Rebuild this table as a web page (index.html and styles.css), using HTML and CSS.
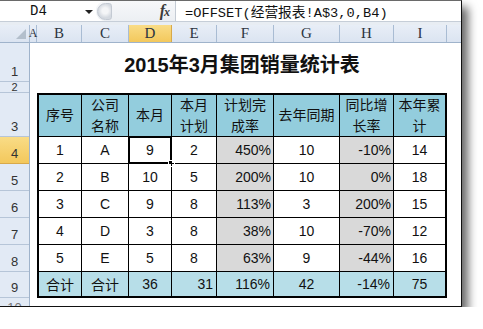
FILE: index.html
```html
<!DOCTYPE html>
<html lang="zh">
<head>
<meta charset="utf-8">
<title>2015年3月集团销量统计表</title>
<link rel="stylesheet" href="styles.css">
</head>
<body>
<div class="frame">
  <div class="fbar">
    <div class="namebox"><span class="ref">D4</span><span class="arrow"></span></div>
    <div class="fmid"><span class="pill"></span><span class="fx"><i>f</i><i class="fxx">x</i></span></div>
    <div class="formula">=OFFSET(经营报表!A$3,0,B4)</div>
  </div>
  <div class="gap"></div>
  <div class="colheads">
    <div class="ch corner"><span class="tri"></span></div>
    <div class="ch w-a">A</div>
    <div class="ch w-b">B</div>
    <div class="ch w-c">C</div>
    <div class="ch w-d sel">D</div>
    <div class="ch w-e">E</div>
    <div class="ch w-f">F</div>
    <div class="ch w-g">G</div>
    <div class="ch w-h">H</div>
    <div class="ch w-i">I</div>
    <div class="ch w-j"></div>
  </div>
  <div class="sheet">
    <div class="rowheads">
      <div class="rh h1">1</div>
      <div class="rh h2">2</div>
      <div class="rh h3">3</div>
      <div class="rh hd sel">4</div>
      <div class="rh hd">5</div>
      <div class="rh hd">6</div>
      <div class="rh hd">7</div>
      <div class="rh hd">8</div>
      <div class="rh h9">9</div>
      <div class="rh h10"><span>10</span></div>
    </div>
    <div class="content">
      <div class="title">2015年3月集团销量统计表</div>
      <div class="table">
        <div class="cell hd-c">序号</div>
        <div class="cell hd-c">公司<br>名称</div>
        <div class="cell hd-c">本月</div>
        <div class="cell hd-c">本月<br>计划</div>
        <div class="cell hd-c">计划完<br>成率</div>
        <div class="cell hd-c">去年同期</div>
        <div class="cell hd-c">同比增<br>长率</div>
        <div class="cell hd-c">本年累<br>计</div>

        <div class="cell">1</div>
        <div class="cell">A</div>
        <div class="cell active">9<span class="selbox"></span><span class="handle"></span></div>
        <div class="cell">2</div>
        <div class="cell grey right">450%</div>
        <div class="cell">10</div>
        <div class="cell grey right">-10%</div>
        <div class="cell">14</div>

        <div class="cell">2</div>
        <div class="cell">B</div>
        <div class="cell">10</div>
        <div class="cell">5</div>
        <div class="cell grey right">200%</div>
        <div class="cell">10</div>
        <div class="cell grey right">0%</div>
        <div class="cell">18</div>

        <div class="cell">3</div>
        <div class="cell">C</div>
        <div class="cell">9</div>
        <div class="cell">8</div>
        <div class="cell grey right">113%</div>
        <div class="cell">3</div>
        <div class="cell grey right">200%</div>
        <div class="cell">15</div>

        <div class="cell">4</div>
        <div class="cell">D</div>
        <div class="cell">3</div>
        <div class="cell">8</div>
        <div class="cell grey right">38%</div>
        <div class="cell">10</div>
        <div class="cell grey right">-70%</div>
        <div class="cell">12</div>

        <div class="cell">5</div>
        <div class="cell">E</div>
        <div class="cell">5</div>
        <div class="cell">8</div>
        <div class="cell grey right">63%</div>
        <div class="cell">9</div>
        <div class="cell grey right">-44%</div>
        <div class="cell">16</div>

        <div class="cell total">合计</div>
        <div class="cell total">合计</div>
        <div class="cell total">36</div>
        <div class="cell total right">31</div>
        <div class="cell total right">116%</div>
        <div class="cell total">42</div>
        <div class="cell total right">-14%</div>
        <div class="cell total">75</div>
      </div>
    </div>
  </div>
</div>
</body>
</html>
```

FILE: styles.css
```css
html, body {
  margin: 0;
  padding: 0;
  background: #fff;
}

.frame {
  width: 462px;
  height: 307px;
  box-sizing: border-box;
  border-top: 1px solid #6a6a6a;
  border-right: 1px solid #111;
  border-bottom: 1px solid #111;
  background: #fff;
  overflow: hidden;
  display: flex;
  flex-direction: column;
  box-shadow: 6px 7px 9px rgba(0, 0, 0, 0.6);
}

/* ---------- formula bar ---------- */
.fbar {
  flex: none;
  height: 21px;
  box-sizing: border-box;
  border-bottom: 1px solid #c6ced8;
  display: flex;
  background: #fff;
}

.namebox {
  width: 96px;
  display: flex;
  align-items: center;
  padding-left: 30px;
  box-sizing: border-box;
}

.ref {
  font-family: "Liberation Mono", monospace;
  font-size: 14px;
  color: #111;
  width: 55px;
}

.arrow {
  width: 0;
  height: 0;
  border-left: 4px solid transparent;
  border-right: 4px solid transparent;
  border-top: 4px solid #222;
  margin-top: 1px;
}

.fmid {
  width: 80px;
  display: flex;
  align-items: center;
  justify-content: space-between;
  background: linear-gradient(#f7f8fa, #eceff3);
  border-radius: 9px 0 0 9px;
  border-right: 1px solid #c4cbd4;
  padding: 0 6px 0 1px;
  box-sizing: border-box;
}

.pill {
  width: 15px;
  height: 17px;
  border-radius: 9px 3px 3px 9px;
  background: radial-gradient(circle at 55% 45%, #f4f5f7 0 3px, #d4d9e0 7px);
  border: 1px solid #c4cad3;
  box-sizing: border-box;
}

.fx {
  font-family: "Liberation Serif", serif;
  font-weight: bold;
  font-size: 16px;
  color: #3a3a3a;
  letter-spacing: -1px;
}

.fx i {
  font-style: italic;
}

.fxx {
  font-size: 12px;
}

.formula {
  flex: 1;
  display: flex;
  align-items: center;
  padding-left: 9px;
  font-family: "Liberation Mono", "Noto Sans CJK SC", monospace;
  font-size: 13.7px;
  color: #111;
  white-space: nowrap;
}

.gap {
  flex: none;
  height: 3px;
  background: #e8edf3;
}

/* ---------- column headers ---------- */
.colheads {
  flex: none;
  height: 18px;
  box-sizing: border-box;
  display: flex;
  background: linear-gradient(#e8eef7, #dbe4f1);
  border-bottom: 1px solid #9fb3cb;
}

.ch {
  flex: none;
  box-sizing: border-box;
  border-right: 1px solid #a9bcd3;
  display: flex;
  align-items: center;
  justify-content: center;
  font-family: "Liberation Serif", serif;
  font-size: 15px;
  color: #2d3440;
}

.corner {
  width: 30px;
  justify-content: flex-end;
  align-items: flex-end;
  padding: 0 3px 3px 0;
}

.tri {
  width: 0;
  height: 0;
  border-left: 10px solid transparent;
  border-bottom: 10px solid #b3bfcc;
}

.w-a { width: 7px; font-size: 12px; }
.w-b { width: 45px; }
.w-c { width: 47px; }
.w-d { width: 43px; }
.w-e { width: 45px; }
.w-f { width: 57px; }
.w-g { width: 66px; }
.w-h { width: 54px; }
.w-i { width: 53px; }
.w-j { flex: 1; border-right: none; }

.ch.sel {
  background: linear-gradient(#f9dc86, #f3c85c);
  border-right-color: #d8a94a;
}

/* ---------- sheet body ---------- */
.sheet {
  flex: 1;
  display: flex;
  min-height: 0;
}

.rowheads {
  flex: none;
  width: 30px;
  box-sizing: border-box;
  border-right: 1px solid #9fb3cb;
  background: #e2eaf5;
  display: flex;
  flex-direction: column;
}

.rh {
  flex: none;
  box-sizing: border-box;
  border-bottom: 1px solid #b6c5d8;
  display: flex;
  align-items: flex-end;
  justify-content: center;
  padding-bottom: 2px;
  font-family: "Liberation Sans", sans-serif;
  font-size: 13px;
  color: #333;
  overflow: hidden;
}

.h1 { height: 39px; }
.h2 { height: 11px; padding-bottom: 0; font-size: 11px; line-height: 10px; }
.h3 { height: 44px; }
.hd { height: 27px; }
.h9 { height: 26px; }
.h10 {
  flex: 1;
  border-bottom: none;
  align-items: flex-start;
  padding: 2px 0 0;
  color: #777;
}

.rh.sel {
  background: linear-gradient(#f9dc86, #f3c85c);
  border-bottom-color: #d8a94a;
}

.content {
  flex: 1;
  padding-left: 7px;
}

.title {
  width: 410px;
  height: 50px;
  box-sizing: border-box;
  padding-top: 10px;
  text-align: center;
  font-family: "Liberation Sans", "Noto Sans CJK SC", sans-serif;
  font-weight: bold;
  font-size: 20px;
  line-height: 24px;
  color: #111;
}

.table {
  width: 410px;
  box-sizing: border-box;
  display: grid;
  grid-template-columns: 42px 46px 42px 44px 56px 65px 53px 51px;
  grid-template-rows: 41px repeat(5, 26px) 24px;
  gap: 1px;
  padding: 2px;
  background: #000;
}

.cell {
  position: relative;
  background: #fff;
  display: flex;
  align-items: center;
  justify-content: center;
  text-align: center;
  font-family: "Liberation Sans", "Noto Sans CJK SC", sans-serif;
  font-size: 14px;
  color: #111;
  white-space: nowrap;
}

.hd-c {
  background: #93cddd;
  line-height: 21px;
}

.grey {
  background: #d9d9d9;
}

.total {
  background: #b7dee8;
}

.right {
  justify-content: flex-end;
  padding-right: 2px;
}

.total.right {
  padding-right: 3px;
}

.selbox {
  position: absolute;
  top: -1px;
  left: -1px;
  right: -1px;
  bottom: -1px;
  border: 2px solid #000;
  box-shadow: inset 0 0 0 1px #fff;
}

.handle {
  position: absolute;
  right: -4px;
  bottom: -4px;
  width: 5px;
  height: 5px;
  background: #000;
  border: 1px solid #fff;
}
```
